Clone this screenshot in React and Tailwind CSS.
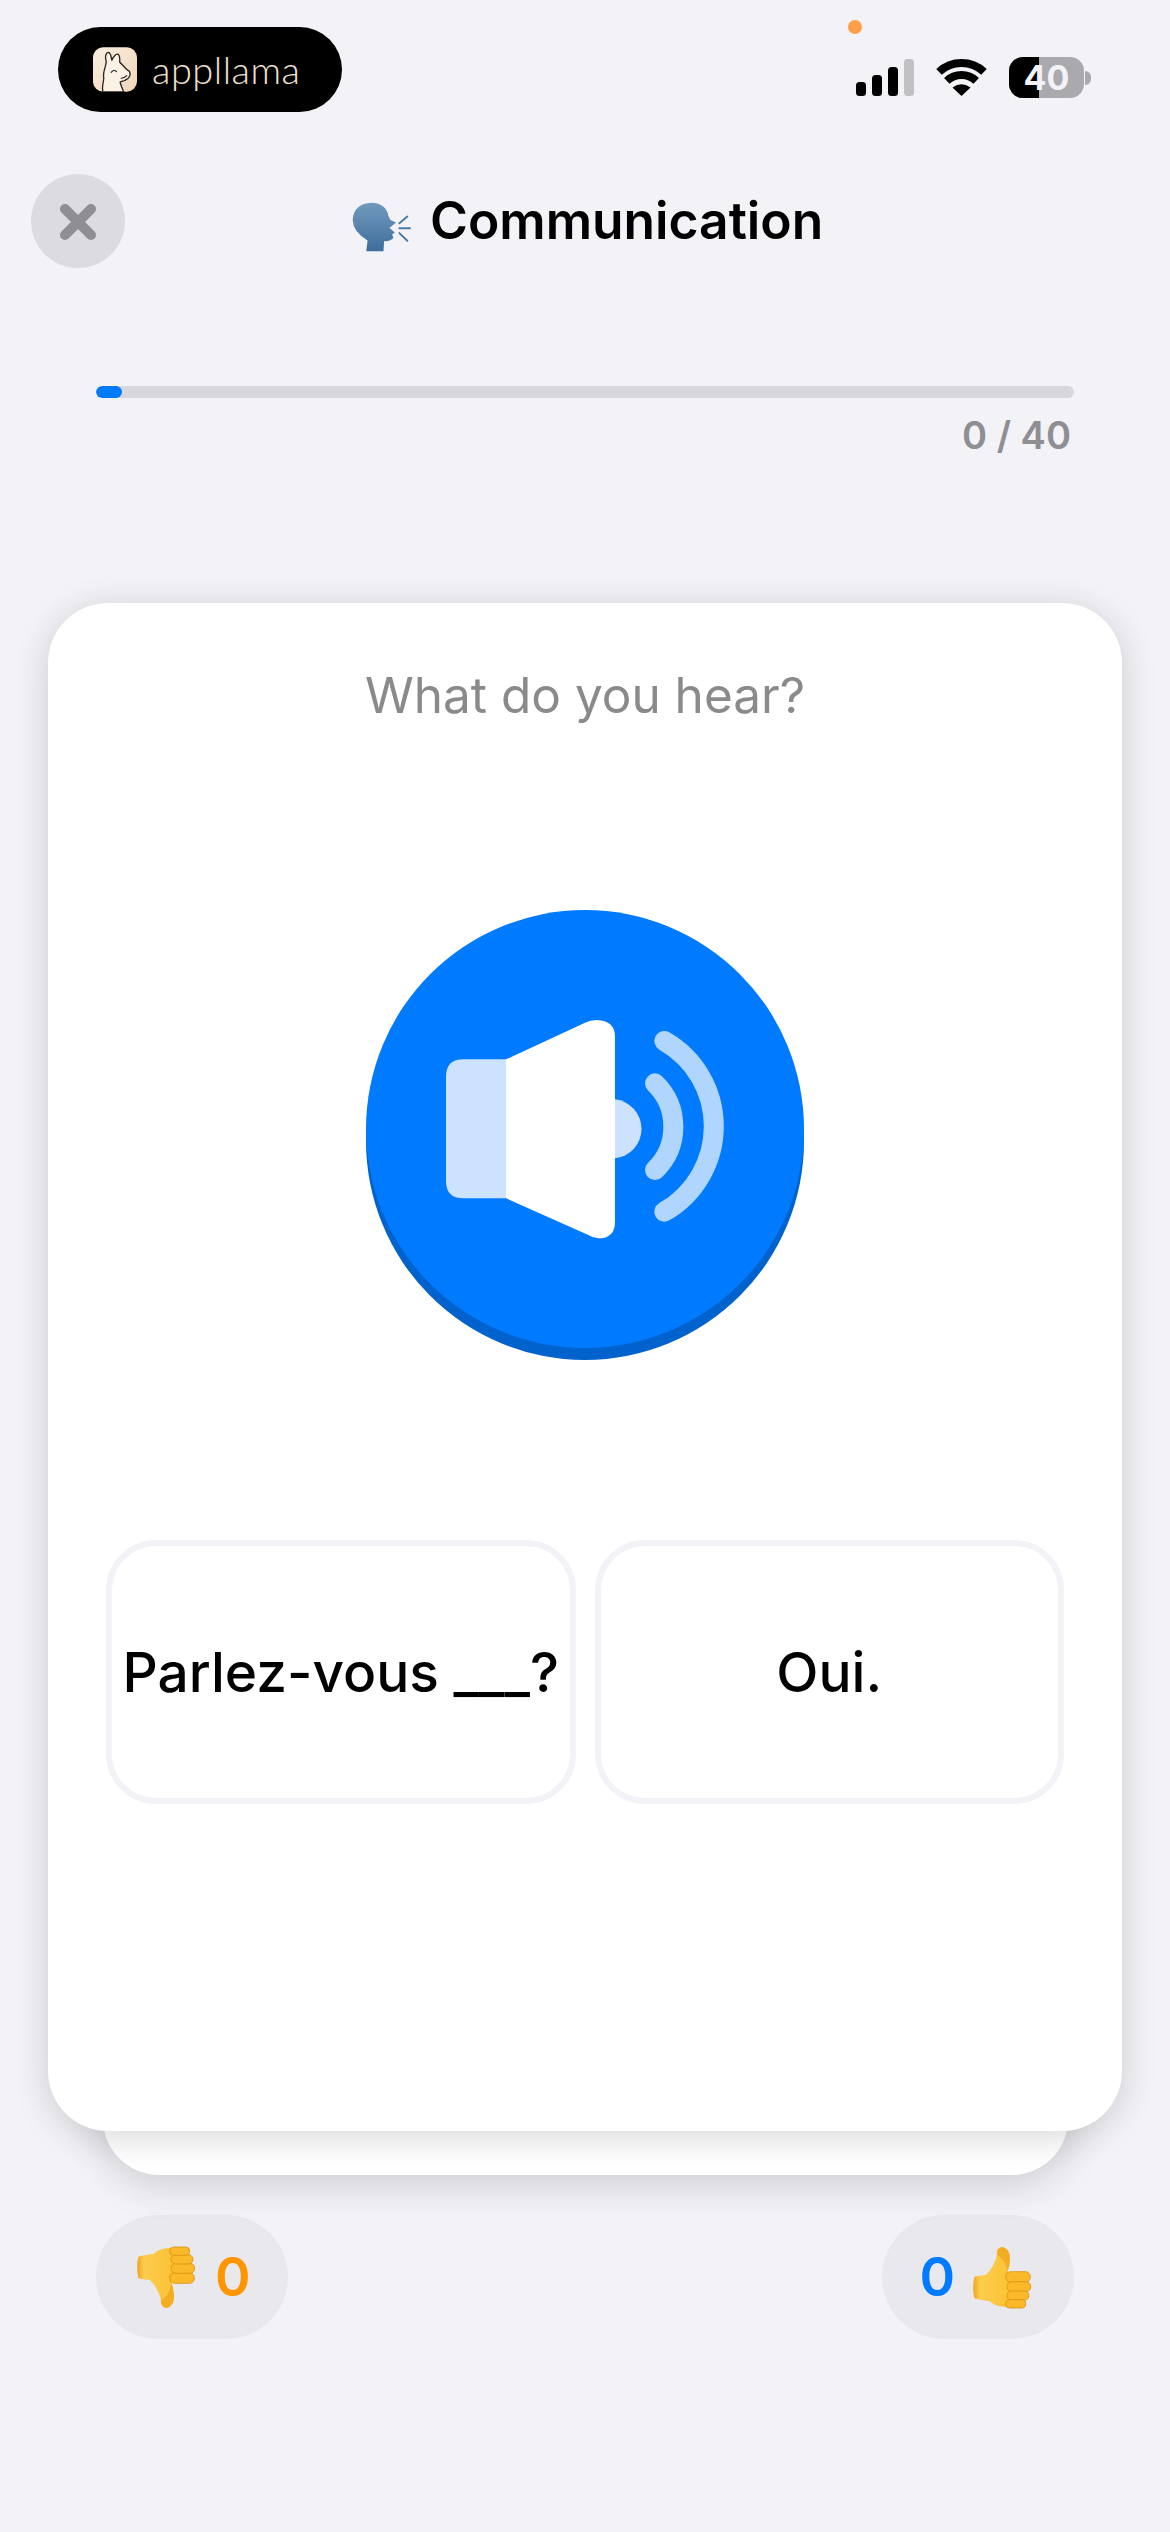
import React from "react";

function LlamaIcon() {
  return (
    <svg width="44" height="45" viewBox="15 12 133 135" className="shrink-0">
      <defs>
        <linearGradient id="lg" x1="0" y1="0" x2="1" y2="1">
          <stop offset="0" stopColor="#fbeee0" />
          <stop offset="1" stopColor="#efd6b8" />
        </linearGradient>
      </defs>
      <rect x="15" y="12" width="133" height="135" rx="32" fill="url(#lg)" />
      <path
        d="M45 147C40 125 50 115 47 100C45 85 55 70 55 55C50 40 55 28 62 28C70 30 70 45 72 52C75 42 85 30 92 34C98 40 95 50 96 58C105 65 112 78 125 85C130 95 125 108 112 112C105 115 100 115 97 118C100 130 105 140 108 147Z"
        fill="#fbf1e4"
        stroke="#2a2622"
        strokeWidth="4"
        strokeLinejoin="round"
      />
      <path d="M70 88Q78 78 86 86M100 106Q110 106 117 98" fill="none" stroke="#2a2622" strokeWidth="3.5" strokeLinecap="round" />
    </svg>
  );
}

function Wifi() {
  return (
    <svg width="51" height="37" viewBox="0 0 51 37">
      <path d="M3 12.9A33 33 0 0 1 48 12.9" fill="none" stroke="#000" strokeWidth="8" />
      <path d="M10.8 21.8A21.5 21.5 0 0 1 40.2 21.8" fill="none" stroke="#000" strokeWidth="8" />
      <path d="M25.5 37L16.5 28.5Q25.5 22 34.5 28.5Z" fill="#000" />
    </svg>
  );
}

function Signal() {
  return (
    <svg width="58" height="37" viewBox="0 0 58 37">
      <rect x="0" y="23" width="10" height="14" rx="3.5" fill="#000" />
      <rect x="16" y="16" width="10" height="21" rx="3.5" fill="#000" />
      <rect x="32" y="8" width="10" height="29" rx="3.5" fill="#000" />
      <rect x="48" y="0" width="10" height="37" rx="3.5" fill="#c0c0c5" />
    </svg>
  );
}

function SpeakingHead() {
  return (
    <svg width="62" height="53" viewBox="60 60 185 160" className="shrink-0 ml-[225px] mt-[10px]">
      <defs>
        <linearGradient id="hg" x1="0" y1="0" x2="0" y2="1">
          <stop offset="0" stopColor="#7199bd" />
          <stop offset="1" stopColor="#3f6e9c" />
        </linearGradient>
      </defs>
      <path
        d="M108 215L112 182Q68 155 67 120Q70 70 125 68Q168 70 175 108L181 120L198 128L186 138L178 144L194 158L186 164L190 174Q180 186 162 184L160 215Z"
        fill="url(#hg)"
      />
      <path d="M208 130L232 110M208 145L240 145M208 160L232 183" stroke="#4a7ba8" strokeWidth="6" strokeLinecap="round" fill="none" />
    </svg>
  );
}

function Thumb({ down }) {
  return (
    <svg width="90" height="85" viewBox="0 0 270 255" className="shrink-0">
      <defs>
        <linearGradient id={down ? "td" : "tu"} x1="0" y1="0" x2="1" y2="0">
          <stop offset="0" stopColor="#eda51f" />
          <stop offset="0.18" stopColor="#fdcb4d" />
          <stop offset="1" stopColor="#fbc234" />
        </linearGradient>
      </defs>
      <g transform={down ? "matrix(1 0 0 -1 0 255)" : undefined}>
        <path
          d="M40 125Q60 120 75 120Q100 95 108 60Q105 38 125 36Q148 42 147 75Q145 95 140 110L150 120L150 215Q110 220 85 198Q55 195 40 190Q33 160 40 125Z"
          fill={`url(#${down ? "td" : "tu"})`}
        />
        <path d="M108 60Q105 38 125 36Q148 42 147 75Q145 95 140 110Q132 70 108 60Z" fill="#ee9f14" opacity="0.6" />
        <rect x="134" y="110" width="74" height="32" rx="15" fill="#f9b928" stroke="#dd9113" strokeWidth="2.5" />
        <rect x="138" y="140" width="71" height="30" rx="14" fill="#f9b928" stroke="#dd9113" strokeWidth="2.5" />
        <rect x="138" y="168" width="66" height="28" rx="14" fill="#f9b928" stroke="#dd9113" strokeWidth="2.5" />
        <rect x="134" y="194" width="60" height="25" rx="12" fill="#f9b928" stroke="#dd9113" strokeWidth="2.5" />
      </g>
    </svg>
  );
}

function Speaker() {
  return (
    <svg width="438" height="438" viewBox="78 90 1314 1314">
      <path d="M498 538L370 538Q318 538 318 590L318 903Q318 955 370 955L498 955Z" fill="#cce2ff" />
      <path
        d="M498 538L735 428Q750 420 770 420Q825 422 825 470L825 1025Q825 1075 775 1075Q760 1075 745 1065L498 955Z"
        fill="#fff"
      />
      <path d="M825 658A89 89 0 0 1 825 835Z" fill="#cce2ff" />
      <path d="M945 610A181 181 0 0 1 945 870" fill="none" stroke="#b0d5ff" strokeWidth="60" strokeLinecap="round" />
      <path d="M973 483A295 295 0 0 1 973 995" fill="none" stroke="#b0d5ff" strokeWidth="60" strokeLinecap="round" />
    </svg>
  );
}

export default function App() {
  return (
    <div className="w-[1170px] h-[2532px] bg-[#f2f2f7] flex flex-col overflow-hidden font-['Inter',sans-serif] text-black">
      <div className="relative flex items-start justify-between pt-[27px] pl-[58px] pr-[79px]">
        <div className="w-[284px] h-[85px] rounded-full bg-black flex items-center pl-[35px]">
          <LlamaIcon />
          <span className="ml-[15px] mt-[-2px] text-[38px] leading-none font-light tracking-[0.5px] text-[#f0e2d0] font-['Lato',sans-serif]">
            appllama
          </span>
        </div>
        <div className="mt-[30px] h-[41px] flex items-center gap-[22px]">
          <Signal />
          <Wifi />
          <div className="flex items-center">
            <div className="relative w-[75px] h-[41px] rounded-[14px] bg-[#a9a9ae] overflow-hidden flex items-center justify-center">
              <div className="absolute left-0 top-0 bottom-0 w-[30px] bg-black" />
              <span className="relative text-[34px] leading-none font-bold text-[#f2f2f7]">40</span>
            </div>
            <div className="w-[6px] h-[14px] ml-[1px] rounded-r-full bg-[#a9a9ae]" />
          </div>
        </div>
        <div className="absolute left-[848px] top-[20px] w-[14px] h-[14px] rounded-full bg-[#ff9f4a]" />
      </div>

      <div className="mt-[62px] flex items-center pl-[31px] h-[94px]">
        <div className="w-[94px] h-[94px] rounded-full bg-[#dcdce0] shrink-0">
          <svg width="94" height="94" viewBox="0 0 94 94">
            <path d="M34 35L60 61M60 35L34 61" stroke="#8e8e93" strokeWidth="10" strokeLinecap="round" />
          </svg>
        </div>
        <SpeakingHead />
        <span className="ml-[18px] text-[51.5px] leading-none font-semibold">Communication</span>
      </div>

      <div className="mt-[118px] mx-[96px]">
        <div className="w-[978px] h-[12px] rounded-full bg-[#d8d8dc] overflow-hidden">
          <div className="w-[26px] h-[12px] rounded-full bg-[#007aff]" />
        </div>
        <div className="mt-[12px] pr-[3px] text-right text-[38px] leading-[50px] font-semibold text-[#8e8e93]">0 / 40</div>
      </div>

      <div className="relative mt-[143px] ml-[48px] w-[1074px]">
        <div className="absolute left-[55px] right-[54px] bottom-[-44px] h-[300px] rounded-[56px] bg-white shadow-[0_8px_40px_rgba(0,0,0,0.16)]" />
        <div className="relative h-[1528px] rounded-[60px] bg-white shadow-[0_6px_36px_rgba(0,0,0,0.16)] flex flex-col items-center">
          <div className="mt-[57px] text-[49.5px] leading-[70px] text-[#8a8a8a]">What do you hear?</div>
          <div className="mt-[180px] w-[438px] h-[438px] rounded-full bg-[#007aff] shadow-[0_12px_0_#0062cc] shrink-0">
            <Speaker />
          </div>
          <div className="mt-[192px] w-full px-[58px] grid grid-cols-2 gap-[19px]">
            <div className="h-[264px] rounded-[50px] border-[6px] border-[#f2f2f7] flex items-center justify-center text-[55px] font-medium whitespace-nowrap">
              Parlez-vous ___?
            </div>
            <div className="h-[264px] rounded-[50px] border-[6px] border-[#f2f2f7] flex items-center justify-center text-[55px] font-medium">
              Oui.
            </div>
          </div>
        </div>
      </div>

      <div className="mt-[84px] flex justify-between px-[96px]">
        <div className="w-[192px] h-[124px] rounded-[62px] bg-[#e8e8ed] flex items-center pl-[29px]">
          <Thumb down />
          <span className="text-[54px] leading-none font-semibold text-[#ff9500]">0</span>
        </div>
        <div className="w-[192px] h-[124px] rounded-[62px] bg-[#e8e8ed] flex items-center justify-end gap-[6px] pr-[23px]">
          <span className="text-[54px] leading-none font-semibold text-[#007aff]">0</span>
          <Thumb />
        </div>
      </div>
    </div>
  );
}
